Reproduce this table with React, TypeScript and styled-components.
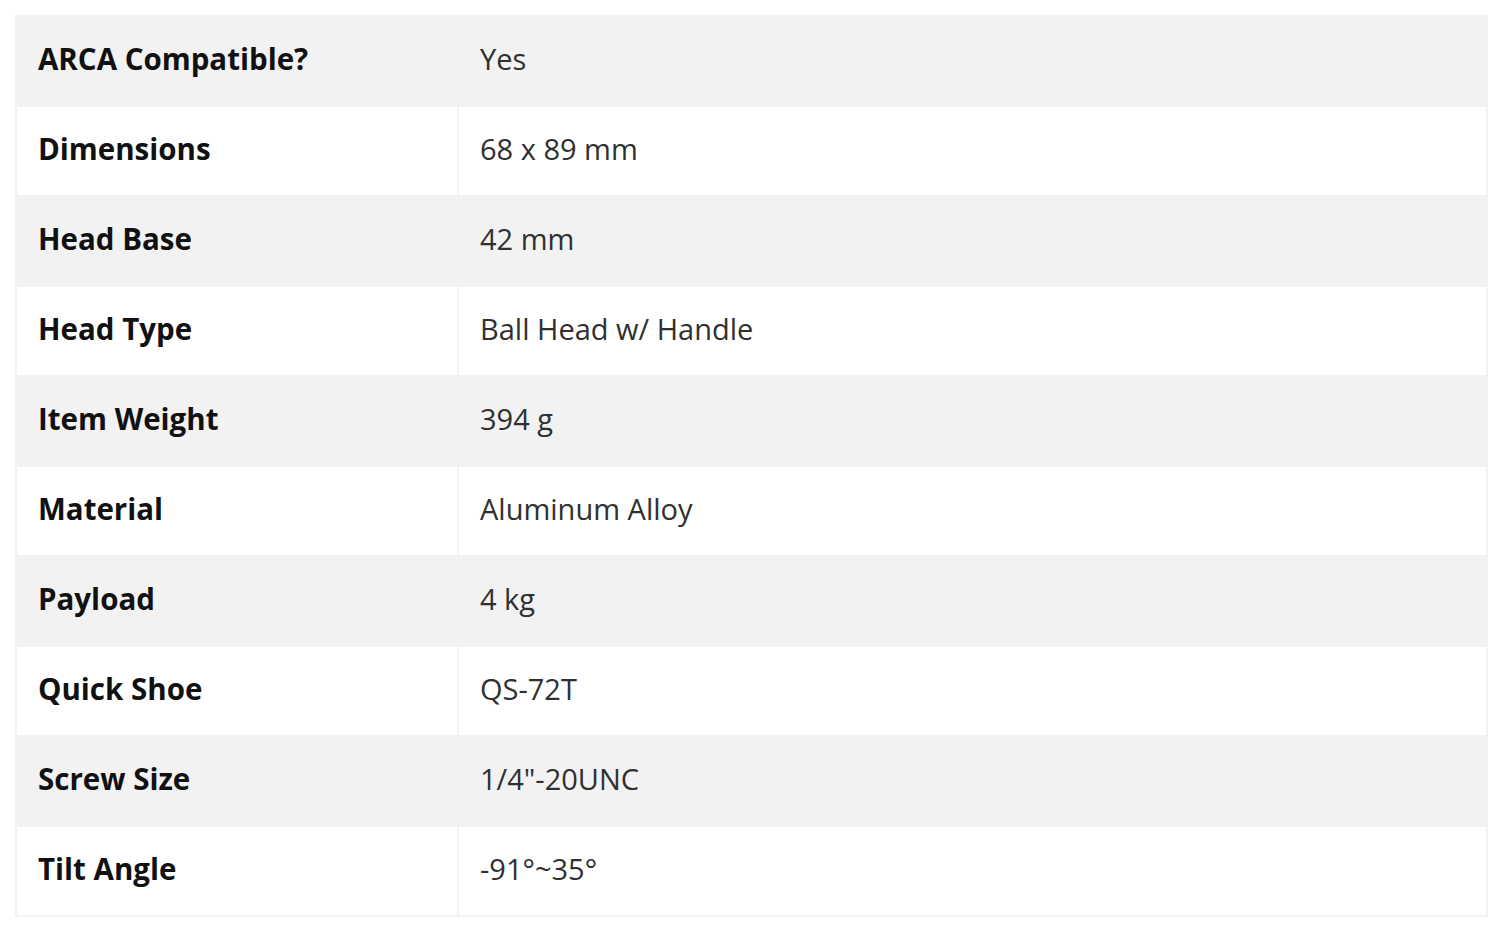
import styled, { createGlobalStyle } from 'styled-components'

const GlobalStyle = createGlobalStyle`
  html, body {
    margin: 0;
    padding: 0;
    background: #ffffff;
  }
  body {
    font-family: 'Open Sans', 'Noto Sans', sans-serif;
  }
`

const Page = styled.div`
  padding: 15px 12px 15px 15px;
`

const SpecTable = styled.table`
  width: 1473px;
  border-collapse: collapse;
  table-layout: fixed;
`

const Row = styled.tr<{ $shaded: boolean }>`
  height: 90px;
  background: ${(p) => (p.$shaded ? '#f2f2f2' : '#ffffff')};
`

const Cell = styled.td`
  border: 2px solid #f2f2f2;
  padding: 0 0 6px 21px;
  font-size: 29px;
  color: #303030;
  vertical-align: middle;
`

const Label = styled(Cell)`
  width: 419px;
  padding-left: 21px;
  font-size: 29.5px;
  font-weight: 700;
  color: #111111;
`

const specs: [string, string][] = [
  ['ARCA Compatible?', 'Yes'],
  ['Dimensions', '68 x 89 mm'],
  ['Head Base', '42 mm'],
  ['Head Type', 'Ball Head w/ Handle'],
  ['Item Weight', '394 g'],
  ['Material', 'Aluminum Alloy'],
  ['Payload', '4 kg'],
  ['Quick Shoe', 'QS-72T'],
  ['Screw Size', '1/4"-20UNC'],
  ['Tilt Angle', '-91°~35°'],
]

const App = () => {
  return (
    <Page>
      <GlobalStyle />
      <SpecTable>
        <tbody>
          {specs.map(([name, value], i) => (
            <Row key={name} $shaded={i % 2 === 0}>
              <Label>{name}</Label>
              <Cell>{value}</Cell>
            </Row>
          ))}
        </tbody>
      </SpecTable>
    </Page>
  )
}

export default App
